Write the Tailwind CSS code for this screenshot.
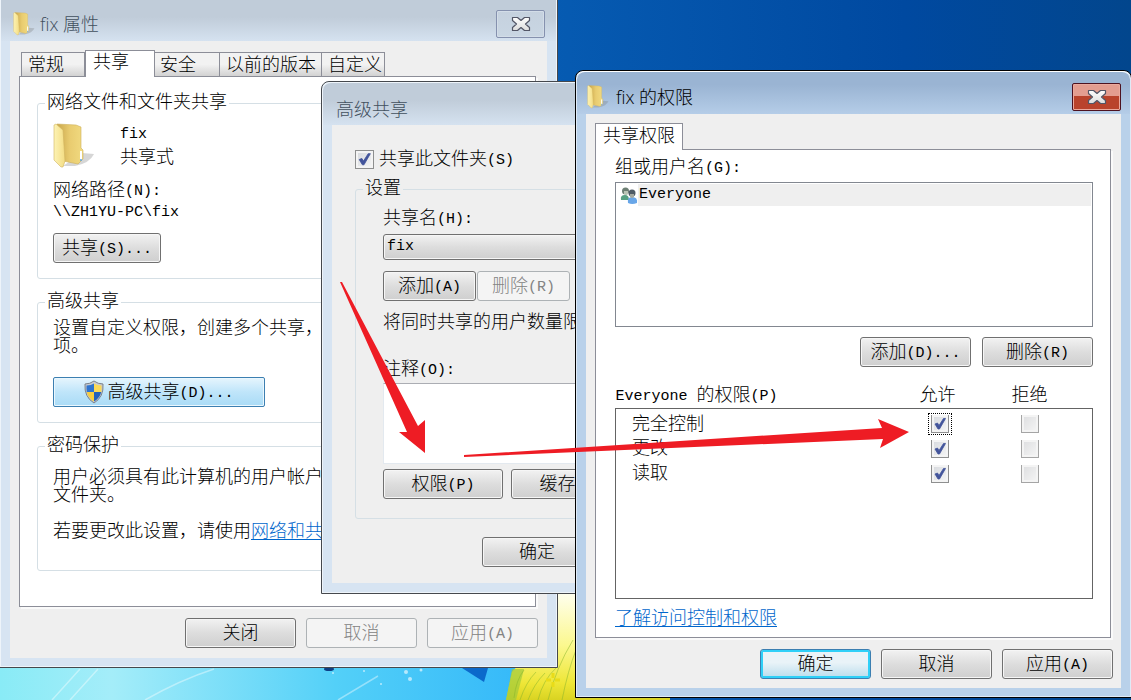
<!DOCTYPE html>
<html lang="zh-CN">
<head>
    <meta charset="UTF-8">
    <meta name="viewport" content="width=device-width, initial-scale=1.0">
    <title>fix 属性</title>
    <script src="https://cdn.jsdelivr.net/npm/@tailwindcss/browser@4"></script>
</head>
<body class="min-h-screen bg-[#0555aa] text-black font-light text-[18px] leading-[18px] font-['Liberation_Mono','Noto_Sans_CJK_SC',monospace]">

    <!-- Shared icons -->
    <svg class="absolute h-0 w-0" aria-hidden="true">
        <defs>
            <linearGradient id="folderFront" x1="0" x2="1"><stop offset="0" stop-color="#fdf3b4"/><stop offset="1" stop-color="#f3dc83"/></linearGradient>
            <linearGradient id="folderBack" x1="0" x2="1"><stop offset="0" stop-color="#c9a64b"/><stop offset=".5" stop-color="#e9cc70"/><stop offset="1" stop-color="#f1da80"/></linearGradient>
            <linearGradient id="closeFill" x1="0" x2="0" y1="0" y2="1"><stop offset="0" stop-color="#ffffff"/><stop offset="1" stop-color="#dcdcdc"/></linearGradient>
            <symbol id="folder" viewBox="0 0 42 46">
                <path d="M29 30 L41 31 Q37 40 22 43 L10 43Z" fill="#777777" opacity=".3"/>
                <path d="M4 1 L23 2 L28 4 L28 25 L30 27 L30 36 L25 41 L10 38Z" fill="url(#folderBack)" stroke="#cdb05a" stroke-width=".6"/>
                <path d="M1 2 L3 1 L10 7 L12 38 L10 44 L8 44 L1 37Z" fill="url(#folderFront)" stroke="#d0b35f" stroke-width=".6"/>
                <path d="M28 28v9" stroke="#ffffff" stroke-width="2"/>
                <path d="M28 36v2" stroke="#5ba3dd" stroke-width="1.5"/>
            </symbol>
            <symbol id="close" viewBox="0 0 20 16">
                <path d="M1.500 1.500 H6.500 L10 4.500 L13.500 1.500 H18.500 V4.500 L14.500 8 L18.500 11.500 V14.500 H13.500 L10 11.500 L6.500 14.500 H1.500 V11.500 L5.500 8 L1.500 4.500Z" fill="url(#closeFill)" stroke="#535666" stroke-width="1.200" stroke-linejoin="round"/>
            </symbol>
            <symbol id="tick" viewBox="0 0 18 18">
                <path d="M4 9 L6.500 8 L8 10.500 L12.500 3.500 L14.500 3.500 L8.500 14 L7 14Z" fill="#42549b" stroke="#42549b" stroke-width=".8" stroke-linejoin="round"/>
            </symbol>
        </defs>
    </svg>

    <main class="relative min-h-screen overflow-hidden">
        <!-- Wallpaper -->
        <svg class="absolute inset-0 w-full h-full" viewBox="0 0 1131 700" preserveAspectRatio="xMidYMid slice">
            <defs>
                <linearGradient id="sky" x1="0" x2="1"><stop offset=".45" stop-color="#075db4"/><stop offset=".8" stop-color="#0049a0"/><stop offset="1" stop-color="#02468d"/></linearGradient>
                <linearGradient id="low" x1="0" x2="1"><stop offset="0" stop-color="#89ebf6"/><stop offset=".2" stop-color="#a4edf9"/><stop offset=".6" stop-color="#53d0f8"/><stop offset="1" stop-color="#2fb4f9"/></linearGradient>
                <linearGradient id="grass" x1="0" x2="0" y1="0" y2="1"><stop offset="0" stop-color="#fffff4"/><stop offset=".5" stop-color="#fbf88f"/><stop offset=".85" stop-color="#eee636"/><stop offset="1" stop-color="#d9d322"/></linearGradient>
            </defs>
            <rect width="1131" height="700" fill="url(#sky)"/>
            <rect y="580" width="560" height="120" fill="url(#low)"/>
            <path d="M520 590 H670 V700 H506 L512 672 L540 640Z" fill="url(#grass)"/>
            <path d="M506 700 L512 669 H524 L516 700Z" fill="#9fc93a" opacity=".7"/>
            <path d="M520 700 Q526 682 536 672 M528 700 Q534 684 545 673 M538 700 Q543 680 556 668 M548 700 Q556 668 573 640 M562 700 Q568 670 576 650 M514 698 Q516 680 524 670" fill="none" stroke="#86b32c" stroke-width="1" opacity=".5"/>
            <path d="M553 673 v14 M546 680 h14" stroke="#e9dc18" stroke-width="3" stroke-dasharray="5 4"/>
            <path d="M462 668 L484 682 L488 668Z" fill="#0b69cb"/>
            <ellipse cx="329" cy="669" rx="5" ry="2" fill="#0d3f86"/>
            <path d="M52 700 L80 669 M70 700 L98 669 M145 700 Q180 680 214 669 M338 700 L378 676" fill="none" stroke="#ffffff" stroke-width="1.500" opacity=".4"/>
            <g fill="#ffffff" opacity=".6"><circle cx="333" cy="673" r="1"/><circle cx="364" cy="671" r="1"/><circle cx="381" cy="684" r="1"/><circle cx="406" cy="672" r="2"/><circle cx="410" cy="679" r="2"/><circle cx="421" cy="670" r="1.500"/></g>
        </svg>

        <!-- Properties window -->
        <section class="absolute -left-px -top-2 w-[559px] border border-[#45484d] rounded-t-lg bg-[#d7e4f2] px-[10px] pb-[9px] shadow-[inset_0_0_0_1px_#eef4fa]">
            <header class="-mx-[9px] flex h-12 items-start justify-between bg-linear-to-b from-[#c0ccd9] from-50% to-[#d5e2f0] pl-[12px] pr-[2px]">
                <div class="flex items-center gap-[5px] pt-[19px] font-['Open_Sans','Noto_Sans_CJK_SC',sans-serif] text-[#42505e] leading-6">
                    <svg class="h-6 w-[22px]"><use href="#folder"/></svg>
                    <h1>fix 属性</h1>
                </div>
                <button type="button" aria-label="关闭窗口" class="mt-[17px] mr-[9px] flex h-7 w-[49px] items-center justify-center rounded-[2px] border border-[#8591ae] bg-linear-to-b from-[#c5d1de] to-[#c9d6e3] shadow-[inset_0_0_0_1px_#d3dde8]">
                    <svg class="h-4 w-5"><use href="#close"/></svg>
                </button>
            </header>
            <div class="bg-[#efefef] pl-[9px] pr-[11px] pt-[9px] pb-[10px]">
                <nav class="relative flex items-end pl-[2px] -mb-px">
                    <button type="button" class="mb-px h-6 w-[64px] border border-b-0 border-[#8c8e98] bg-linear-to-b from-[#f2f2f2] from-50% to-[#d2d2d2] pt-[2px] pl-[6px] text-left">常规</button>
                    <button type="button" class="h-[27px] w-[70px] border border-b-0 border-[#8c8e98] bg-white pl-[7px] pb-[2px] text-left">共享</button>
                    <button type="button" class="mb-px h-6 w-[65px] border border-l-0 border-b-0 border-[#8c8e98] bg-linear-to-b from-[#f2f2f2] from-50% to-[#d2d2d2] pt-[2px] pl-[5px] text-left">安全</button>
                    <button type="button" class="mb-px h-6 w-[102px] border border-l-0 border-b-0 border-[#8c8e98] bg-linear-to-b from-[#f2f2f2] from-50% to-[#d2d2d2] pt-[2px] pl-[6px] text-left">以前的版本</button>
                    <button type="button" class="mb-px h-6 w-[63px] border border-l-0 border-b-0 border-[#8c8e98] bg-linear-to-b from-[#f2f2f2] from-50% to-[#d2d2d2] pt-[2px] pl-[6px] text-left">自定义</button>
                </nav>
                <div class="border border-[#8c8e98] bg-white px-[17px] pt-[17px] pb-[35px] shadow-[2px_2px_0_#fafafa]">
                    <fieldset class="rounded-[3px] border border-[#d5dfe5] px-[15px] pb-[15px]">
                        <legend class="-ml-[8px] px-[2px]">网络文件和文件夹共享</legend>
                        <div class="mt-[11px] flex gap-[25px]">
                            <svg class="h-[46px] w-[42px]"><use href="#folder"/></svg>
                            <div class="pt-[3px]">
                                <p class="text-[15px]">fix</p>
                                <p class="mt-[5px]">共享式</p>
                            </div>
                        </div>
                        <p class="mt-[13px]">网络路径<span class="align-[1px] text-[15px] leading-[15px]">(N):</span></p>
                        <p class="mt-[4px] text-[15px]">\\ZH1YU-PC\fix</p>
                        <button type="button" class="mt-[11px] h-[30px] w-[108px] rounded-[3px] border border-[#707070] bg-linear-to-b from-[#f2f2f2] via-[#dddddd] to-[#cfcfcf] pt-[2px] shadow-[inset_0_0_0_1px_#f6f6f6]">共享<span class="align-[1px] text-[15px] leading-[15px]">(S)...</span></button>
                    </fieldset>
                    <fieldset class="mt-[14px] rounded-[3px] border border-[#d5dfe5] px-[15px] pb-[15px]">
                        <legend class="-ml-[8px] px-[2px]">高级共享</legend>
                        <p class="mt-[9px]">设置自定义权限，创建多个共享，<br>项。</p>
                        <button type="button" class="mt-[21px] flex h-[30px] w-[212px] items-center justify-center gap-[3px] rounded-[2px] border border-[#3c7fb1] bg-linear-to-b from-[#e6f5fd] via-[#bfe5fa] to-[#a9dbf6] shadow-[inset_0_0_0_1px_#eaf7fe]">
                            <svg class="h-6 w-5" viewBox="0 0 20 24">
                                <path d="M10 1 Q14 4 19 4 Q20 17 10 23 Q0 17 1 4 Q6 4 10 1Z" fill="#c9ccd1" stroke="#7b828b"/>
                                <path d="M10 3.500 V12 H2.800 Q2.300 9 2.500 5.500 Q7 5.500 10 3.500Z" fill="#2f74cf"/>
                                <path d="M10 3.500 V12 H17.200 Q17.700 9 17.500 5.500 Q13 5.500 10 3.500Z" fill="#fbd957"/>
                                <path d="M10 21.500 V12 H2.800 Q4 18 10 21.500Z" fill="#f8cd3e"/>
                                <path d="M10 21.500 V12 H17.200 Q16 18 10 21.500Z" fill="#2461ba"/>
                            </svg>
                            <span class="pt-[2px]">高级共享<span class="align-[1px] text-[15px] leading-[15px]">(D)...</span></span>
                        </button>
                    </fieldset>
                    <fieldset class="mt-[14px] rounded-[3px] border border-[#d5dfe5] px-[15px] pb-[29px]">
                        <legend class="-ml-[8px] px-[2px]">密码保护</legend>
                        <p class="mt-[14px] whitespace-nowrap">用户必须具有此计算机的用户帐户<br>文件夹。</p>
                        <p class="mt-[18px] whitespace-nowrap">若要更改此设置，请使用<a href="#" class="text-[#0066cc] underline underline-offset-2">网络和共享中心</a></p>
                    </fieldset>
                </div>
                <div class="mt-[11px] flex justify-end gap-[10px] -mr-[2px]">
                    <button type="button" class="h-[30px] w-[111px] rounded-[3px] border border-[#707070] bg-linear-to-b from-[#f2f2f2] via-[#dddddd] to-[#cfcfcf] pt-[2px] shadow-[inset_0_0_0_1px_#f6f6f6]">关闭</button>
                    <button type="button" disabled class="h-[30px] w-[111px] rounded-[3px] border border-[#adb2b5] bg-[#f4f4f4] pt-[2px] text-[#838383]">取消</button>
                    <button type="button" disabled class="h-[30px] w-[111px] rounded-[3px] border border-[#adb2b5] bg-[#f4f4f4] pt-[2px] text-[#838383]">应用<span class="align-[1px] text-[15px] leading-[15px]">(A)</span></button>
                </div>
            </div>
        </section>

        <!-- Advanced sharing window -->
        <section class="absolute left-[321px] top-[81px] w-[380px] rounded-t-lg border border-[#45484d] bg-[#d7e4f2] px-[10px] pb-[10px] shadow-[inset_0_0_0_1px_#eef4fa]">
            <header class="-mx-[9px] flex h-[43px] items-center rounded-t-lg border-t border-[#eef4fa] bg-linear-to-b from-[#c0ccd9] from-40% to-[#d5e2f0] pl-[13px] pt-[8px]">
                <h2 class="font-['Noto_Sans_CJK_SC',sans-serif] text-[#42505e]">高级共享</h2>
            </header>
            <div class="bg-[#efefef] px-[23px] pt-[25px] pb-[16px]">
                <div class="flex items-center gap-[5px]">
                    <span class="grid">
                        <input id="share" type="checkbox" checked class="peer col-start-1 row-start-1 h-[19px] w-[19px] appearance-none border border-[#8e8f8f] bg-linear-to-br from-[#d5d8dd] to-[#f6f6f6] shadow-[inset_0_0_0_2px_#f4f4f4]">
                        <svg class="pointer-events-none invisible col-start-1 row-start-1 h-[19px] w-[19px] peer-checked:visible"><use href="#tick"/></svg>
                    </span>
                    <label for="share">共享此文件夹<span class="align-[1px] text-[15px] leading-[15px]">(S)</span></label>
                </div>
                <fieldset class="mt-[11px] rounded-[3px] border border-[#d5dfe5] pl-[27px] pb-[19px]">
                    <legend class="-ml-[20px] px-[2px]">设置</legend>
                    <label for="shareName" class="mt-[12px] block">共享名<span class="align-[1px] text-[15px] leading-[15px]">(H):</span></label>
                    <select id="shareName" class="mt-[6px] block h-[26px] w-full appearance-none rounded-[3px] border border-[#707070] bg-linear-to-b from-[#f2f2f2] via-[#dddddd] to-[#cfcfcf] px-[3px] text-[15px] shadow-[inset_0_0_0_1px_#f6f6f6]">
                        <option>fix</option>
                    </select>
                    <div class="mt-[11px] flex gap-px">
                        <button type="button" class="h-[30px] w-[93px] rounded-[3px] border border-[#707070] bg-linear-to-b from-[#f2f2f2] via-[#dddddd] to-[#cfcfcf] pt-[2px] shadow-[inset_0_0_0_1px_#f6f6f6]">添加<span class="align-[1px] text-[15px] leading-[15px]">(A)</span></button>
                        <button type="button" disabled class="h-[30px] w-[93px] rounded-[3px] border border-[#adb2b5] bg-[#f4f4f4] pt-[2px] text-[#838383]">删除<span class="align-[1px] text-[15px] leading-[15px]">(R)</span></button>
                    </div>
                    <p class="mt-[13px] whitespace-nowrap">将同时共享的用户数量限制为</p>
                    <label for="note" class="mt-[29px] block">注释<span class="align-[1px] text-[15px] leading-[15px]">(O):</span></label>
                    <textarea id="note" class="mt-[4px] block h-[81px] w-full resize-none border border-[#e3e9ef] border-t-[#abadb3] bg-white"></textarea>
                    <div class="mt-[5px] flex gap-2">
                        <button type="button" class="h-[30px] w-[120px] rounded-[3px] border border-[#707070] bg-linear-to-b from-[#f2f2f2] via-[#dddddd] to-[#cfcfcf] pt-[2px] shadow-[inset_0_0_0_1px_#f6f6f6]">权限<span class="align-[1px] text-[15px] leading-[15px]">(P)</span></button>
                        <button type="button" class="h-[30px] w-[120px] rounded-[3px] border border-[#707070] bg-linear-to-b from-[#f2f2f2] via-[#dddddd] to-[#cfcfcf] pt-[2px] shadow-[inset_0_0_0_1px_#f6f6f6]">缓存<span class="align-[1px] text-[15px] leading-[15px]">(C)</span></button>
                    </div>
                </fieldset>
                <div class="mt-[18px] pl-[127px]">
                    <button type="button" class="h-[30px] w-[110px] rounded-[3px] border border-[#707070] bg-linear-to-b from-[#f2f2f2] via-[#dddddd] to-[#cfcfcf] pt-[2px] shadow-[inset_0_0_0_1px_#f6f6f6]">确定</button>
                </div>
            </div>
        </section>

        <!-- Permissions window -->
        <section class="absolute left-[575px] -right-px top-[70px] rounded-t-lg border border-black bg-[#b9d1ea] px-[10px] pb-[9px] shadow-[inset_0_0_0_1px_#dfeaf6]">
            <header class="-mx-[9px] flex h-[43px] items-start justify-between rounded-t-lg border-t border-white bg-linear-to-b from-[#9ab4d3] from-30% to-[#b5cde8] pl-[10px] pr-[9px]">
                <div class="flex items-center gap-[7px] pt-[13px] font-['Open_Sans','Noto_Sans_CJK_SC',sans-serif] leading-6">
                    <svg class="h-6 w-[22px]"><use href="#folder"/></svg>
                    <h2>fix 的权限</h2>
                </div>
                <button type="button" aria-label="关闭窗口" class="mt-[11px] flex h-7 w-[49px] items-center justify-center rounded-[2px] border border-[#4d1220] bg-linear-to-b from-[#e39d90] from-45% to-[#b9432c] to-45% shadow-[inset_0_0_0_1px_#eba99d]">
                    <svg class="h-4 w-5"><use href="#close"/></svg>
                </button>
            </header>
            <div class="bg-[#efefef] pl-[9px] pr-[10px] pt-[9px] pb-[9px]">
                <nav class="relative -mb-px flex">
                    <button type="button" class="h-[27px] w-[88px] border border-b-0 border-[#8c8e98] bg-white">共享权限</button>
                </nav>
                <div class="border border-[#8c8e98] bg-white pl-[19px] pt-[9px] pb-[9px] pr-[17px] shadow-[2px_2px_0_#fafafa]">
                    <h3>组或用户名<span class="align-[1px] text-[15px] leading-[15px]">(G):</span></h3>
                    <ul class="mt-[5px] h-[145px] border border-[#828790] p-px">
                        <li class="flex h-[22px] items-center">
                            <svg class="ml-[3px] h-[19px] w-[18px]" viewBox="0 0 18 19">
                                <path d="M1 14 Q0 9 5 9 Q9 9 9 14Z" fill="#58a183"/>
                                <circle cx="5.500" cy="5" r="3.500" fill="#6d7f74"/>
                                <path d="M4 5 h4 v3 q-2 2-4 0Z" fill="#b9c4b5"/>
                                <path d="M8 17 Q7 11 12 11 Q18 11 17 17 Q12 19 8 17Z" fill="#68a6e8"/>
                                <circle cx="12" cy="7" r="3.500" fill="#4e5b66"/>
                                <path d="M10 8 h4 v3 q-2 2-4 0Z" fill="#a3a8a0"/>
                            </svg>
                            <span class="h-full flex-1 bg-[#efefef] pl-px text-[15px] leading-[22px]">Everyone</span>
                        </li>
                    </ul>
                    <div class="mt-[10px] flex justify-end gap-[11px]">
                        <button type="button" class="h-[30px] w-[111px] rounded-[3px] border border-[#707070] bg-linear-to-b from-[#f2f2f2] via-[#dddddd] to-[#cfcfcf] pt-[2px] shadow-[inset_0_0_0_1px_#f6f6f6]">添加<span class="align-[1px] text-[15px] leading-[15px]">(D)...</span></button>
                        <button type="button" class="h-[30px] w-[111px] rounded-[3px] border border-[#707070] bg-linear-to-b from-[#f2f2f2] via-[#dddddd] to-[#cfcfcf] pt-[2px] shadow-[inset_0_0_0_1px_#f6f6f6]">删除<span class="align-[1px] text-[15px] leading-[15px]">(R)</span></button>
                    </div>
                    <table class="mt-[14px] w-full table-fixed border-collapse">
                        <thead>
                            <tr class="h-[27px]">
                                <th scope="col" class="pt-1 text-left font-light"><span class="align-[1px] text-[15px] leading-[15px]">Everyone </span>的权限<span class="align-[1px] text-[15px] leading-[15px]">(P)</span></th>
                                <th scope="col" class="w-[90px] pt-1 pr-1 font-light">允许</th>
                                <th scope="col" class="w-[90px] pt-1 font-light">拒绝</th>
                                <th class="w-[18px]"></th>
                            </tr>
                        </thead>
                        <tbody class="border border-[#646464]">
                            <tr class="h-[31px]">
                                <th scope="row" class="pt-[2px] pl-[16px] text-left font-light">完全控制</th>
                                <td>
                                    <span class="mx-auto grid w-[24px] place-items-center border border-dotted border-black py-px">
                                        <input type="checkbox" checked aria-label="允许 完全控制" class="peer col-start-1 row-start-1 h-[18px] w-[18px] appearance-none border border-t-0 border-[#8e8f8f] bg-linear-to-br from-[#d5d8dd] to-[#f6f6f6] shadow-[inset_0_0_0_2px_#f4f4f4]">
                                        <svg class="pointer-events-none invisible col-start-1 row-start-1 h-[18px] w-[18px] peer-checked:visible"><use href="#tick"/></svg>
                                    </span>
                                </td>
                                <td><input type="checkbox" aria-label="拒绝 完全控制" class="mx-auto block h-[18px] w-[18px] appearance-none border border-t-0 border-[#a5a5a5] bg-linear-to-br from-[#dcdddf] to-[#f6f6f6] shadow-[inset_0_0_0_2px_#f4f4f4]"></td>
                                <td></td>
                            </tr>
                            <tr class="h-[19px]">
                                <th scope="row" class="pl-[16px] text-left font-light">更改</th>
                                <td>
                                    <span class="mx-auto grid w-[24px] place-items-center">
                                        <input type="checkbox" checked aria-label="允许 更改" class="peer col-start-1 row-start-1 h-[18px] w-[18px] appearance-none border border-t-0 border-[#8e8f8f] bg-linear-to-br from-[#d5d8dd] to-[#f6f6f6] shadow-[inset_0_0_0_2px_#f4f4f4]">
                                        <svg class="pointer-events-none invisible col-start-1 row-start-1 h-[18px] w-[18px] peer-checked:visible"><use href="#tick"/></svg>
                                    </span>
                                </td>
                                <td><input type="checkbox" aria-label="拒绝 更改" class="mx-auto block h-[18px] w-[18px] appearance-none border border-t-0 border-[#a5a5a5] bg-linear-to-br from-[#dcdddf] to-[#f6f6f6] shadow-[inset_0_0_0_2px_#f4f4f4]"></td>
                                <td></td>
                            </tr>
                            <tr class="h-[31px]">
                                <th scope="row" class="pl-[16px] text-left font-light">读取</th>
                                <td>
                                    <span class="mx-auto grid w-[24px] place-items-center">
                                        <input type="checkbox" checked aria-label="允许 读取" class="peer col-start-1 row-start-1 h-[18px] w-[18px] appearance-none border border-t-0 border-[#8e8f8f] bg-linear-to-br from-[#d5d8dd] to-[#f6f6f6] shadow-[inset_0_0_0_2px_#f4f4f4]">
                                        <svg class="pointer-events-none invisible col-start-1 row-start-1 h-[18px] w-[18px] peer-checked:visible"><use href="#tick"/></svg>
                                    </span>
                                </td>
                                <td><input type="checkbox" aria-label="拒绝 读取" class="mx-auto block h-[18px] w-[18px] appearance-none border border-t-0 border-[#a5a5a5] bg-linear-to-br from-[#dcdddf] to-[#f6f6f6] shadow-[inset_0_0_0_2px_#f4f4f4]"></td>
                                <td></td>
                            </tr>
                            <tr class="h-[109px]"><td colspan="4"></td></tr>
                        </tbody>
                    </table>
                    <p class="mt-[11px]"><a href="#" class="text-[#0066cc] underline underline-offset-2">了解访问控制和权限</a></p>
                </div>
                <div class="-mr-[2px] mt-[11px] flex justify-end gap-[10px]">
                    <button type="button" class="h-[30px] w-[111px] rounded-[3px] border border-[#3c7fb1] bg-linear-to-b from-[#e9f3f8] from-45% to-[#b9dcec] pt-[2px] shadow-[inset_0_0_0_2px_#2fd0f8]">确定</button>
                    <button type="button" class="h-[30px] w-[111px] rounded-[3px] border border-[#707070] bg-linear-to-b from-[#f2f2f2] via-[#dddddd] to-[#cfcfcf] pt-[2px] shadow-[inset_0_0_0_1px_#f6f6f6]">取消</button>
                    <button type="button" class="h-[30px] w-[111px] rounded-[3px] border border-[#707070] bg-linear-to-b from-[#f2f2f2] via-[#dddddd] to-[#cfcfcf] pt-[2px] shadow-[inset_0_0_0_1px_#f6f6f6]">应用<span class="align-[1px] text-[15px] leading-[15px]">(A)</span></button>
                </div>
            </div>
        </section>

        <!-- Red arrows -->
        <svg class="pointer-events-none absolute left-0 top-0" width="1131" height="700" viewBox="0 0 1131 700" fill="#ee1c24">
            <path d="M340 282 L342 282 L418 426 L425 420 L425 453 L399 432 L407 432Z"/>
            <path d="M464 455 L882 428 L878 419 L909 432 L880 448 L883 439 L464 457Z"/>
        </svg>
    </main>
</body>
</html>
